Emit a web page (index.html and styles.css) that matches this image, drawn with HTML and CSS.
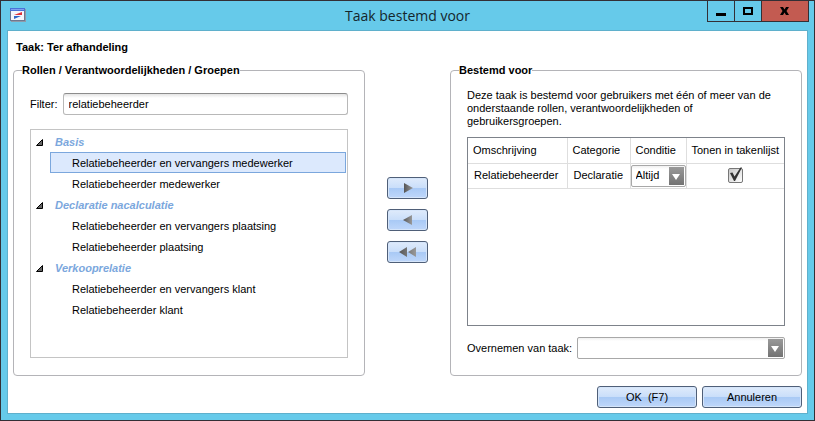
FILE: index.html
```html
<!DOCTYPE html>
<html lang="nl">

<head>
    <meta charset="UTF-8">
    <meta name="viewport" content="width=device-width, initial-scale=1.0">
    <title>Taak bestemd voor</title>
    <link rel="stylesheet" href="styles.css">
</head>

<body>
    <div class="window">
        <header class="title-bar">
            <svg class="app-icon" width="16" height="14" viewBox="0 0 16 14">
                <rect x="1" y="1" width="15" height="13" fill="#8f9aa8"/>
                <rect x="0.5" y="0.5" width="14" height="12" fill="#f4f6fb" stroke="#6f7890"/>
                <rect x="0" y="0" width="15" height="3" fill="#4a72d8"/>
                <rect x="1" y="1" width="13" height="1" fill="#7fa2f0"/>
                <path d="M4 7 L12 4 V7 Z" fill="#e03038"/>
                <path d="M4 8 H11 L4 11 Z" fill="#2f66c8"/>
            </svg>
            <h1>Taak bestemd voor</h1>
            <div class="window-controls">
                <button type="button" class="minimize" aria-label="Minimaliseren">
                    <svg width="10" height="9" viewBox="0 0 10 9"><rect x="0" y="6" width="10" height="3"/></svg>
                </button>
                <button type="button" class="maximize" aria-label="Maximaliseren">
                    <svg width="10" height="9" viewBox="0 0 10 9"><path d="M0 0H10V8H0Z M2 2V6H8V2Z" fill-rule="evenodd"/></svg>
                </button>
                <button type="button" class="close" aria-label="Sluiten">
                    <svg width="10" height="9" viewBox="0 0 10 9"><path d="M0 0H3L4.500 2.500L6 0H9L6.500 4L9 8H6L4.500 5.500L3 8H0L2.500 4Z"/></svg>
                </button>
            </div>
        </header>

        <form class="content">
            <h2>Taak: Ter afhandeling</h2>

            <div class="panels">
                <fieldset class="panel">
                    <legend>Rollen / Verantwoordelijkheden / Groepen</legend>
                    <div class="field">
                        <label for="filter">Filter:</label>
                        <input type="text" id="filter" value="relatiebeheerder">
                    </div>
                    <div class="tree">
                        <details open>
                            <summary><svg width="7" height="7" viewBox="0 0 7 7"><path d="M6.500 0.500V6.500H0.500Z" fill="#666" stroke="#000"/></svg>Basis</summary>
                            <ul>
                                <li class="selected">Relatiebeheerder en vervangers medewerker</li>
                                <li>Relatiebeheerder medewerker</li>
                            </ul>
                        </details>
                        <details open>
                            <summary><svg width="7" height="7" viewBox="0 0 7 7"><path d="M6.500 0.500V6.500H0.500Z" fill="#666" stroke="#000"/></svg>Declaratie nacalculatie</summary>
                            <ul>
                                <li>Relatiebeheerder en vervangers plaatsing</li>
                                <li>Relatiebeheerder plaatsing</li>
                            </ul>
                        </details>
                        <details open>
                            <summary><svg width="7" height="7" viewBox="0 0 7 7"><path d="M6.500 0.500V6.500H0.500Z" fill="#666" stroke="#000"/></svg>Verkooprelatie</summary>
                            <ul>
                                <li>Relatiebeheerder en vervangers klant</li>
                                <li>Relatiebeheerder klant</li>
                            </ul>
                        </details>
                    </div>
                </fieldset>

                <div class="transfer">
                    <button type="button" class="btn" aria-label="Toevoegen">
                        <svg width="18" height="10" viewBox="0 0 18 10"><path d="M5 0L14 5L5 10Z" fill="url(#arrow)"/>
                            <defs><linearGradient id="arrow"><stop offset="0" stop-color="#555"/><stop offset="1" stop-color="#999"/></linearGradient></defs>
                        </svg>
                    </button>
                    <button type="button" class="btn" aria-label="Verwijderen">
                        <svg width="18" height="10" viewBox="0 0 18 10"><path d="M13 0L4 5L13 10Z" fill="url(#arrow)"/></svg>
                    </button>
                    <button type="button" class="btn" aria-label="Alles verwijderen">
                        <svg width="18" height="10" viewBox="0 0 18 10"><path d="M8 0L0 5L8 10Z M17 0L9 5L17 10Z" fill="url(#arrow)"/></svg>
                    </button>
                </div>

                <fieldset class="panel panel-assigned">
                    <legend>Bestemd voor</legend>
                    <p>Deze taak is bestemd voor gebruikers met één of meer van de onderstaande rollen, verantwoordelijkheden of gebruikersgroepen.</p>
                    <div class="grid">
                        <table>
                            <thead>
                                <tr>
                                    <th class="col-name">Omschrijving</th>
                                    <th class="col-category">Categorie</th>
                                    <th class="col-condition">Conditie</th>
                                    <th>Tonen in takenlijst</th>
                                </tr>
                            </thead>
                            <tbody>
                                <tr>
                                    <td>Relatiebeheerder</td>
                                    <td>Declaratie</td>
                                    <td class="cell-select">
                                        <div class="select">
                                            <select aria-label="Conditie">
                                                <option>Altijd</option>
                                            </select>
                                        </div>
                                    </td>
                                    <td class="cell-check">
                                        <label class="check">
                                            <input type="checkbox" aria-label="Tonen in takenlijst" checked>
                                            <svg width="15" height="16" viewBox="0 0 15 16"><path d="M2 6L4.500 5.500L6.500 9.500L12.500 0.500L14 0.500L7 14H6Z" fill="#333"/></svg>
                                        </label>
                                    </td>
                                </tr>
                            </tbody>
                        </table>
                    </div>
                    <div class="field">
                        <label for="takeover">Overnemen van taak:</label>
                        <div class="select">
                            <select id="takeover">
                                <option></option>
                            </select>
                        </div>
                    </div>
                </fieldset>
            </div>

            <div class="actions">
                <button type="submit" class="btn">OK&nbsp; (F7)</button>
                <button type="button" class="btn">Annuleren</button>
            </div>
        </form>
    </div>
</body>

</html>
```

FILE: styles.css
```css
* {
    margin: 0;
    padding: 0;
    box-sizing: border-box;
}

body {
    font-family: "Liberation Sans", Arial, sans-serif;
    font-size: 11px;
    line-height: 13px;
    color: #000;
}

button,
input,
select {
    font: inherit;
    color: inherit;
}

svg {
    display: block;
}

.window {
    min-height: 100vh;
    display: flex;
    flex-direction: column;
    background-color: #66caea;
    border: 1px solid #332f35;
    padding: 0 7px 7px;
}

/* Title bar */
.title-bar {
    display: grid;
    grid-template-columns: 1fr auto 1fr;
    height: 30px;
}

.app-icon {
    margin: 7px 0 0 2px;
}

.title-bar h1 {
    font-family: "Open Sans", "Noto Sans", sans-serif;
    font-size: 14px;
    font-weight: normal;
    line-height: 30px;
    color: #14262c;
}

.window-controls {
    display: flex;
    justify-self: end;
    height: 21px;
    margin-right: -2px;
    border: 1px solid #332f35;
    border-top: none;
}

.window-controls button {
    display: flex;
    align-items: center;
    justify-content: center;
    width: 27px;
    background: none;
    border: none;
    border-right: 1px solid #332f35;
}

.window-controls .close {
    width: 46px;
    background-color: #c35b51;
    border-right: none;
}

/* Dialog content */
.content {
    flex: 1;
    display: flex;
    flex-direction: column;
    gap: 10px;
    background-color: #fff;
    box-shadow: 0 0 0 1px #5fb0cc;
    padding: 10px 5px 5px;
}

.content h2 {
    font-size: 11px;
    padding-left: 3px;
}

.panels {
    flex: 1;
    display: grid;
    grid-template-columns: 1fr 85px 1fr;
}

.panel {
    display: flex;
    flex-direction: column;
    min-width: 0;
    border: 1px solid #b4b4b8;
    border-radius: 4px;
    padding: 16px 16px 17px;
}

.panel-assigned {
    padding: 12px 16px 16px;
}

.panel legend {
    font-weight: bold;
    margin-left: -8px;
}

.field {
    display: flex;
    align-items: center;
    gap: 5px;
}

.field input,
.field .select {
    flex: 1;
    min-width: 0;
}

.field input {
    height: 22px;
    padding: 0 5px;
    border: 1px solid #b8b8b8;
    border-top-color: #8c8c8c;
    border-radius: 3px;
    background: linear-gradient(#e4e4e4, #fff 4px);
}

/* Roles tree */
.tree {
    flex: 1;
    margin-top: 14px;
    padding: 1px;
    border: 1px solid #c4c4c4;
}

.tree summary {
    display: flex;
    align-items: center;
    gap: 12px;
    height: 21px;
    padding: 2px 0 0 4px;
    list-style: none;
    font-weight: bold;
    font-style: italic;
    color: #7ba7dd;
}

.tree ul {
    list-style: none;
    margin-left: 18px;
}

.tree li {
    height: 21px;
    padding-left: 21px;
    border: 1px solid transparent;
    line-height: 20px;
}

.tree .selected {
    background-color: #dce9fd;
    border-color: #7ba7dd;
}

/* Buttons */
.btn {
    height: 22px;
    border: 1px solid #4f5f78;
    border-radius: 3px;
    background: linear-gradient(#dfebfb, #c9defa 50%, #a8c9f5 50%, #bfd7fa);
    box-shadow: inset 0 0 0 1px #d5e5fa;
}

.transfer {
    display: flex;
    flex-direction: column;
    align-items: center;
    justify-content: center;
    gap: 10px;
}

.transfer .btn {
    display: flex;
    align-items: center;
    justify-content: center;
    width: 41px;
}

.actions {
    display: flex;
    justify-content: flex-end;
    gap: 5px;
}

.actions .btn {
    width: 100px;
}

/* Assigned roles */
.grid {
    flex: 1;
    margin: 9px 0 11px;
    border: 1px solid #7d828a;
}

.grid table {
    width: 100%;
    border-collapse: collapse;
    table-layout: fixed;
}

.grid th,
.grid td {
    height: 25px;
    padding: 0 5px;
    border-right: 1px solid #dedede;
    border-bottom: 1px solid #dedede;
    font-weight: normal;
    text-align: left;
    white-space: nowrap;
}

.grid th:last-child,
.grid td:last-child {
    border-right: none;
}

.grid td {
    padding: 0 6px;
}

.col-name {
    width: 99px;
}

.col-category {
    width: 63px;
}

.col-condition {
    width: 56px;
}

.grid .cell-select,
.grid .cell-check {
    padding: 0;
}

.select {
    position: relative;
}

.select select {
    display: block;
    width: 100%;
    height: 22px;
    padding: 0 20px 0 4px;
    border: 1px solid #a8a8a8;
    border-radius: 2px;
    background: linear-gradient(#f0f0f0, #fff 3px);
    appearance: none;
}

.select::before {
    content: "";
    position: absolute;
    top: 2px;
    right: 2px;
    bottom: 2px;
    width: 15px;
    background: linear-gradient(#999, #737373);
    pointer-events: none;
}

.select::after {
    content: "";
    position: absolute;
    top: 9px;
    right: 6px;
    border: solid transparent;
    border-width: 6px 4px 0;
    border-top-color: #fff;
    pointer-events: none;
}

.check {
    position: relative;
    display: block;
    width: 15px;
    height: 15px;
    margin: 0 auto;
}

.check input {
    display: block;
    width: 15px;
    height: 15px;
    border: 1px solid #777;
    border-radius: 2px;
    background: linear-gradient(135deg, #c8c8c8, #fff);
    appearance: none;
}

.check svg {
    position: absolute;
    top: -1px;
    left: 0;
    visibility: hidden;
    pointer-events: none;
}

.check input:checked + svg {
    visibility: visible;
}
```
